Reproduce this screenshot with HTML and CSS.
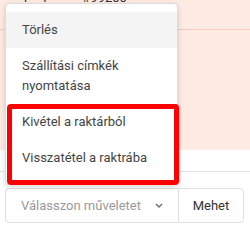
FILE: index.html
```html
<!DOCTYPE html>
<html lang="hu">
<head>
    <meta charset="UTF-8">
    <meta name="viewport" content="width=device-width, initial-scale=1.0">
    <title>Műveletek</title>
    <link rel="stylesheet" href="styles.css">
</head>
<body>
    <div class="orders">
        <div class="row first">
            <span class="cell-label">l</span>
            <span class="cell-label second">l</span>
            <span class="cell-id">#99200</span>
        </div>
        <div class="row tall"></div>
    </div>

    <div class="actions">
        <div class="select">
            <span class="placeholder">Válasszon műveletet</span>
            <svg class="chevron" width="8" height="5" viewBox="0 0 8 5">
                <polyline points="1,1 4,4 7,1" fill="none" stroke="#666" stroke-width="1.3"/>
            </svg>
        </div>
        <button class="go">Mehet</button>
    </div>

    <ul class="menu">
        <li class="item active">Törlés</li>
        <li class="item">Szállítási címkék nyomtatása</li>
        <li class="item">Kivétel a raktárból</li>
        <li class="item">Visszatétel a raktrába</li>
    </ul>
    <div class="highlight"></div>
</body>
</html>
```

FILE: styles.css
```css
body {
    margin: 0;
    font-family: Roboto, "Liberation Sans", sans-serif;
    font-size: 13px;
    color: #444;
    background: #fff;
    overflow: hidden;
}
.orders {
    margin-top: -12px;
    margin-bottom: 21px;
    background-color: #fdebe4;
}
.row {
    height: 41px;
    border-bottom: 1px solid #f6cbbd;
    display: flex;
    line-height: 20px;
    color: #333;
}
.row.tall {
    height: 120px;
    border-bottom: none;
}
.cell-label {
    margin-left: 24px;
}
.cell-label.second {
    margin-left: 16px;
}
.cell-id {
    margin-left: 36px;
}
.actions {
    border-top: 1px solid #e3e3e3;
    padding: 16px 5px 0;
    display: flex;
}
.select {
    width: 173px;
    height: 35px;
    box-sizing: border-box;
    border: 1px solid #e0e0e0;
    border-right: none;
    border-radius: 4px 0 0 4px;
    display: flex;
    align-items: center;
    padding-left: 15px;
}
.placeholder {
    color: #9a9a9a;
    flex: 1;
}
.chevron {
    margin-right: 15px;
}
.go {
    width: 66px;
    height: 35px;
    border: 1px solid #e0e0e0;
    border-radius: 0 4px 4px 0;
    background: #fff;
    font-family: inherit;
    font-size: 13px;
    color: #333;
    padding: 0;
}
.menu {
    position: absolute;
    left: 5px;
    top: 3px;
    width: 173px;
    box-sizing: border-box;
    margin: 0;
    padding: 8px 0;
    list-style: none;
    background: #fff;
    border: 1px solid #dcdcdc;
    border-radius: 4px;
    box-shadow: 0 2px 6px rgba(0, 0, 0, 0.15);
}
.item {
    padding: 8px 16px;
    line-height: 20px;
    color: #444;
}
.item.active {
    background-color: #f4f4f4;
}
.highlight {
    position: absolute;
    left: 7px;
    top: 104px;
    width: 172px;
    height: 81px;
    box-sizing: border-box;
    border: 5px solid #ff0000;
    border-radius: 4px;
}
```
